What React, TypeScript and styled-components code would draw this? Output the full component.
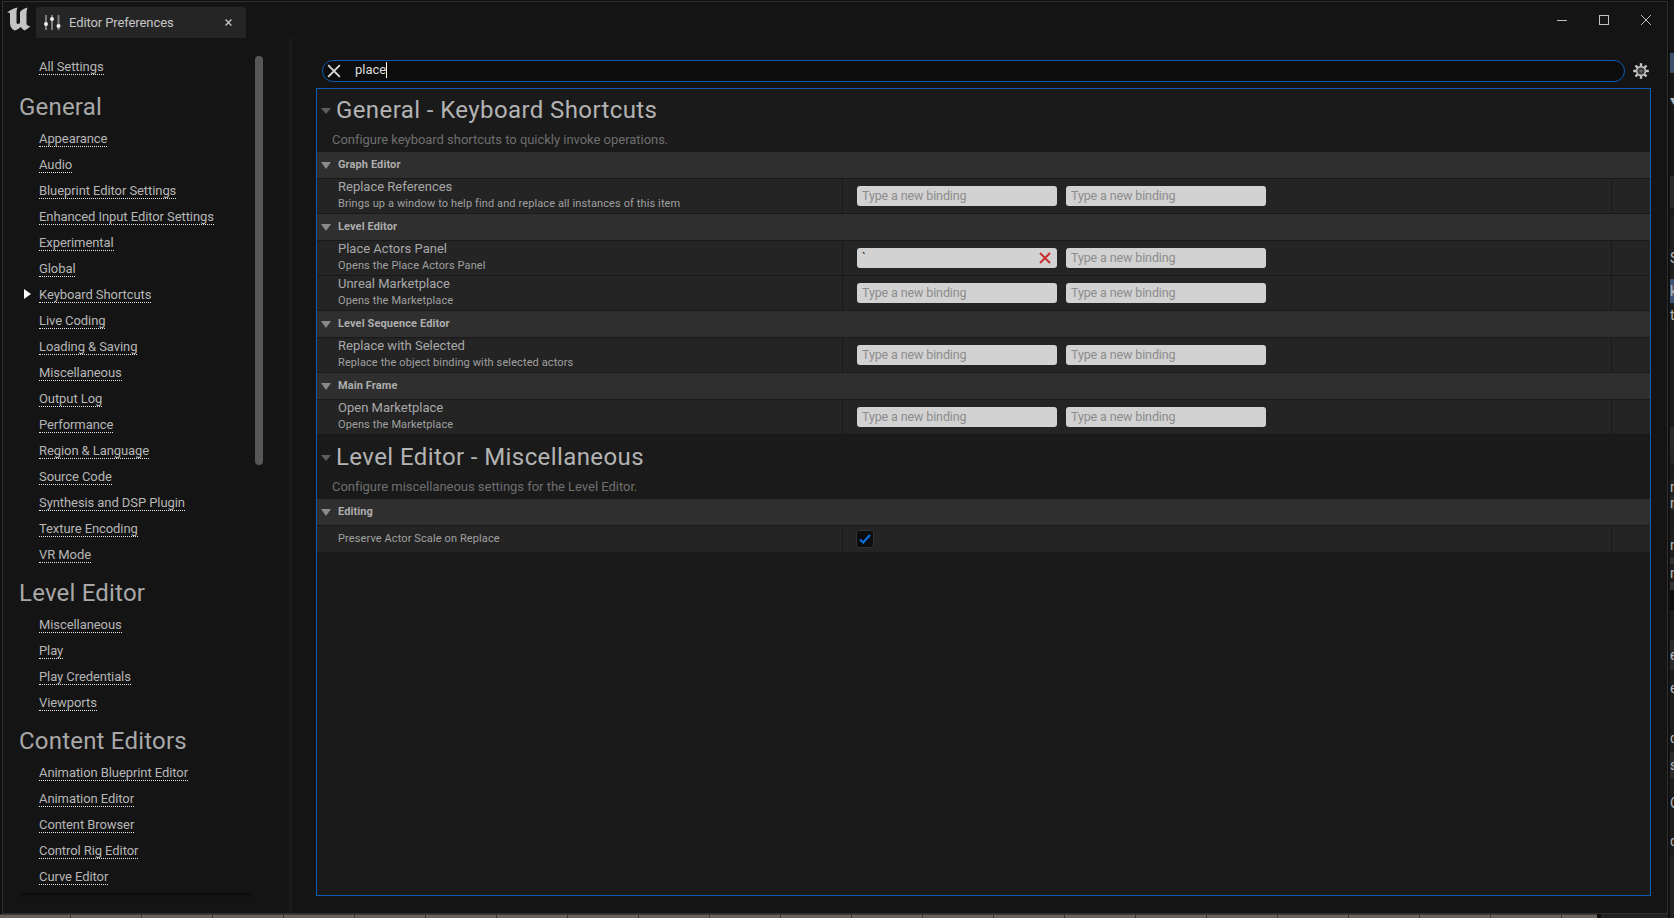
import React from "react";
import styled, { createGlobalStyle } from "styled-components";

const Global = createGlobalStyle`
  html, body { margin: 0; padding: 0; background: #0f0f0f; overflow: hidden; }
  * { box-sizing: border-box; }
  body { font-family: Roboto, "Liberation Sans", sans-serif; }
`;

const Page = styled.div`
  width: 1674px;
  height: 918px;
  display: flex;
  overflow: hidden;
  background: #0f0f0f;
`;
const LeftColumn = styled.div`
  width: 1668px;
  height: 918px;
  display: flex;
  flex-direction: column;
  flex: none;
`;
const Window = styled.div`
  margin: 1px 0 0 2px;
  height: 913px;
  flex: none;
  border: 1px solid #2f2f2f;
  background: #141414;
  display: flex;
  flex-direction: column;
`;
const TitleBar = styled.div`
  height: 36px;
  flex: none;
  display: flex;
  align-items: flex-end;
  padding-left: 3px;
  position: relative;
`;
const LogoWrap = styled.div`
  width: 25px;
  height: 31px;
  margin-right: 5px;
  align-self: flex-end;
  svg { display: block; }
`;
const Tab = styled.div`
  width: 210px;
  height: 31px;
  background: #252525;
  border-radius: 4px 4px 0 0;
  display: flex;
  align-items: center;
  padding-left: 8px;
  color: #c6c6c6;
  font-size: 13px;
  letter-spacing: -0.1px;
`;
const TabLabel = styled.span`
  margin-left: 8px;
  flex: 1;
`;
const TabClose = styled.span`
  margin-right: 14px;
  display: flex;
`;
const WindowControls = styled.div`
  margin-left: auto;
  align-self: center;
  display: flex;
  align-items: center;
  gap: 30px;
  padding-right: 15px;
  margin-top: -1px;
`;
const Body = styled.div`
  flex: 1;
  min-height: 0;
  display: flex;
`;
const Sidebar = styled.nav`
  width: 286px;
  flex: none;
  padding: 15px 0 0 36px;
  position: relative;
  overflow: hidden;
`;
const SideDivider = styled.div`
  width: 3px;
  flex: none;
  background: #1a1a1a;
`;
const SideRow = styled.div`
  height: 26px;
  display: flex;
  align-items: center;
  position: relative;
`;
const SideLink = styled.span`
  color: #b6b6b6;
  font-size: 13px;
  line-height: 15px;
  letter-spacing: -0.08px;
  border-bottom: 1px dotted #e6e6e6;
  margin-top: 1px;
`;
const AllRow = styled(SideRow)`
  margin-bottom: 2px;
`;
const SideHeading = styled.div`
  height: 44px;
  margin-left: -20px;
  padding-top: 11px;
  font-size: 24px;
  line-height: 30px;
  letter-spacing: 0.2px;
  color: #a8a8a8;
`;
const ActiveArrow = styled.span`
  position: absolute;
  left: -15px;
  top: 8px;
  width: 0;
  height: 0;
  border-left: 7px solid #fff;
  border-top: 5.5px solid transparent;
  border-bottom: 5.5px solid transparent;
`;
const Scrollbar = styled.div`
  position: absolute;
  left: 252px;
  top: 18px;
  width: 8px;
  height: 409px;
  background: #575757;
  border-radius: 4px;
`;
const SideShadow = styled.div`
  position: absolute;
  left: 17px;
  width: 232px;
  top: 855px;
  height: 4px;
  background: linear-gradient(to bottom, #0a0a0a, #141414);
`;
const Main = styled.main`
  flex: 1;
  min-width: 0;
  padding: 22px 16px 0 24px;
  display: flex;
  flex-direction: column;
`;
const SearchRow = styled.div`
  height: 22px;
  flex: none;
  display: flex;
  align-items: center;
  padding-left: 6px;
`;
const SearchBox = styled.div`
  width: 1303px;
  height: 22px;
  border: 1px solid #0a5cb3;
  border-radius: 11px;
  background: #0c0c0c;
  display: flex;
  align-items: center;
  padding-left: 4px;
  color: #dcdcdc;
  font-size: 13px;
  flex: none;
`;
const SearchText = styled.span`
  margin-left: 14px;
  margin-top: -3px;
  line-height: 16px;
  border-right: 1px solid #fff;
`;
const GearWrap = styled.div`
  margin-left: 8px;
  display: flex;
`;
const Panel = styled.div`
  margin-top: 6px;
  width: 1335px;
  height: 808px;
  flex: none;
  border: 1px solid #0a5cb3;
  background: #1a1a1a;
`;
const SectionHead = styled.div<{ $lower?: boolean }>`
  height: ${(p) => (p.$lower ? "64px" : "63px")};
  padding: ${(p) => (p.$lower ? "7px" : "6px")} 0 0 4px;
`;
const SectionTitle = styled.div`
  display: flex;
  align-items: center;
  font-size: 24px;
  line-height: 30px;
  color: #b3b3b3;
  letter-spacing: 0.4px;
`;
const TitleArrow = styled.span`
  width: 0;
  height: 0;
  border-top: 6px solid #5c5c5c;
  border-left: 5px solid transparent;
  border-right: 5px solid transparent;
  margin-right: 5px;
  margin-top: 2px;
`;
const SectionDesc = styled.div`
  margin: 7px 0 0 11px;
  font-size: 13px;
  line-height: 16px;
  color: #6e6e6e;
  letter-spacing: -0.03px;
`;
const CategoryRow = styled.div`
  height: 27px;
  background: #2f2f2f;
  border-bottom: 1px solid #191919;
  display: flex;
  align-items: center;
  padding-left: 4px;
  font-size: 11px;
  font-weight: 700;
  letter-spacing: 0.1px;
  color: #adadad;
`;
const CategoryLabel = styled.span`
  margin-top: -1px;
`;
const CategoryArrow = styled.span`
  width: 0;
  height: 0;
  border-top: 7px solid #8a8a8a;
  border-left: 5px solid transparent;
  border-right: 5px solid transparent;
  margin-right: 7px;
  margin-top: 1px;
`;
const Row = styled.div<{ $short?: boolean }>`
  height: ${(p) => (p.$short ? "26px" : "35px")};
  background: #242424;
  border-bottom: ${(p) => (p.$short ? "0" : "1px solid #191919")};
  display: flex;
`;
const NameCell = styled.div<{ $single?: boolean }>`
  width: 526px;
  flex: none;
  padding-left: 21px;
  display: flex;
  flex-direction: column;
  justify-content: ${(p) => (p.$single ? "center" : "flex-start")};
  border-right: 1px solid #191919;
`;
const RowName = styled.div`
  font-size: 13px;
  line-height: 15px;
  color: #a8a8a8;
`;
const RowSub = styled.div`
  font-size: 11px;
  line-height: 16px;
  color: #a0a0a0;
  letter-spacing: 0.11px;
`;
const RowSubSpaced = styled(RowSub)`
  margin-top: 2px;
`;
const ValueCell = styled.div`
  width: 769px;
  flex: none;
  display: flex;
  align-items: center;
  gap: 9px;
  padding-left: 14px;
  border-right: 1px solid #191919;
`;
const Binding = styled.div<{ $set?: boolean }>`
  width: 200px;
  height: 20px;
  border-radius: 3px;
  background: #d2d2d2;
  color: ${(p) => (p.$set ? "#222" : "#8c8c8c")};
  font-size: 12.5px;
  letter-spacing: -0.12px;
  line-height: 20px;
  padding: 0 5px;
  display: flex;
  justify-content: space-between;
`;
const RedX = styled.span`
  display: flex;
  align-items: center;
  margin-right: 1px;
`;
const CheckBox = styled.div`
  width: 18px;
  height: 18px;
  margin-left: -1px;
  background: #0d0d0d;
  border: 1px solid #333;
  border-radius: 3px;
  display: flex;
  align-items: center;
  justify-content: center;
`;
const BottomRow = styled.div`
  flex: 1;
  display: flex;
`;
const Brick = styled.div`
  width: 1597px;
  flex: none;
  background: repeating-linear-gradient(to right, #6a625c 0 70px, #3a3633 70px 71px);
  border-top: 1px solid #3a3633;
`;
const BottomTail = styled.div`
  flex: 1;
  margin-left: 4px;
  background: #222;
`;
const RightStrip = styled.div`
  width: 6px;
  flex: none;
  padding-left: 2px;
  display: flex;
  flex-direction: column;
  overflow: hidden;
`;
const StripSeg = styled.div<{ $h: number; $bg: string }>`
  height: ${(p) => p.$h}px;
  flex: none;
  background: ${(p) => p.$bg};
  color: #b5b5b5;
  font-size: 14px;
  line-height: ${(p) => p.$h}px;
  white-space: nowrap;
  overflow: hidden;
`;

const segments: { h: number; bg: string; t?: string }[] = [
  { h: 53, bg: "#141414" },
  { h: 20, bg: "#3d4f6b" },
  { h: 22, bg: "#171717" },
  { h: 10, bg: "#171717", t: "▾" },
  { h: 71, bg: "#171717" },
  { h: 32, bg: "#2a2a2a" },
  { h: 7, bg: "#181818" },
  { h: 25, bg: "#1e1e1e" },
  { h: 36, bg: "#1e1e1e", t: "S" },
  { h: 3, bg: "#1e1e1e" },
  { h: 24, bg: "#3f5577", t: "k" },
  { h: 24, bg: "#1c1c1c", t: "t" },
  { h: 100, bg: "#191919" },
  { h: 20, bg: "#2a2a2a" },
  { h: 16, bg: "#262626" },
  { h: 15, bg: "#1c1c1c" },
  { h: 18, bg: "#222", t: "n" },
  { h: 14, bg: "#2a2a2a", t: "n" },
  { h: 22, bg: "#1c1c1c" },
  { h: 26, bg: "#1e1e1e", t: "n" },
  { h: 6, bg: "#333" },
  { h: 18, bg: "#1e1e1e", t: "n" },
  { h: 8, bg: "#333" },
  { h: 20, bg: "#0d0d0d" },
  { h: 30, bg: "#1a1a1a" },
  { h: 30, bg: "#2a2a2a", t: "e" },
  { h: 36, bg: "#1c1c1c", t: "e" },
  { h: 18, bg: "#1c1c1c" },
  { h: 28, bg: "#1c1c1c", t: "d" },
  { h: 26, bg: "#2a2a2a", t: "s" },
  { h: 50, bg: "#1c1c1c", t: "C" },
  { h: 26, bg: "#1c1c1c", t: "d" },
  { h: 64, bg: "#222" },
];

const general = ["Appearance","Audio","Blueprint Editor Settings","Enhanced Input Editor Settings","Experimental","Global","Keyboard Shortcuts","Live Coding","Loading & Saving","Miscellaneous","Output Log","Performance","Region & Language","Source Code","Synthesis and DSP Plugin","Texture Encoding","VR Mode"];
const level = ["Miscellaneous","Play","Play Credentials","Viewports"];
const content = ["Animation Blueprint Editor","Animation Editor","Content Browser","Control Rig Editor","Curve Editor"];

const Links = ({ items }: { items: string[] }) => (
  <>
    {items.map((t) => (
      <SideRow key={t}>
        {t === "Keyboard Shortcuts" && <ActiveArrow />}
        <SideLink>{t}</SideLink>
      </SideRow>
    ))}
  </>
);

const Logo = () => (
  <svg width="25" height="24" viewBox="0 0 24 24">
    <path fill="#c4c4c4" d="M0.5 6C2.5 3.5 6 1.5 11 0.5C10 3 10 5 10 8L10 15C10 17 11 17.5 13 16.5L13.5 16L13.5 5C15 3 18 1.2 21 0.5C20.3 3 20 5 20 8L20 16C20 18 21.5 19.5 24 19C22 21 20 22.5 18 23.5C16.5 22.5 15 21.5 14.5 20C12.5 21.5 10 23 8 23.5C5 22 3.5 19.5 3.5 16L3.5 7C3.5 5.5 2 5.5 0.5 6Z" />
  </svg>
);
const SlidersIcon = () => (
  <svg width="17" height="16" viewBox="0 0 17 16">
    <g fill="#7c7c7c">
      <rect x="1" y="0" width="2" height="15" />
      <rect x="7" y="0" width="2" height="15" />
      <rect x="13.5" y="0" width="2" height="15" />
    </g>
    <g fill="#f0f0f0">
      <circle cx="2" cy="9" r="2" />
      <circle cx="8" cy="4" r="2" />
      <circle cx="14.5" cy="11" r="2" />
    </g>
  </svg>
);
const XIcon = ({ size, color, w }: { size: number; color: string; w: number }) => (
  <svg width={size} height={size} viewBox="0 0 12 12">
    <path d="M1 1L11 11M11 1L1 11" stroke={color} strokeWidth={w} fill="none" />
  </svg>
);
const Gear = () => (
  <svg width="16" height="16" viewBox="0 0 16 16">
    <g fill="#c8c8c8">
      {[0, 45, 90, 135].map((a) => (
        <rect key={a} x="6.8" y="0.2" width="2.4" height="15.6" transform={`rotate(${a} 8 8)`} />
      ))}
    </g>
    <circle cx="8" cy="8" r="5.2" fill="#bcbcbc" />
    <circle cx="8" cy="8" r="3.6" fill="#3a3a3a" />
    <circle cx="8" cy="8" r="1.6" fill="#666" />
  </svg>
);

const Bind = ({ value }: { value?: string }) => (
  <Binding $set={!!value}>
    {value ?? "Type a new binding"}
    {value && (
      <RedX>
        <XIcon size={12} color="#c9302c" w={2} />
      </RedX>
    )}
  </Binding>
);

const ShortcutRow = ({ name, sub, first }: { name: string; sub: string; first?: string }) => (
  <Row>
    <NameCell>
      <RowName>{name}</RowName>
      <RowSubSpaced>{sub}</RowSubSpaced>
    </NameCell>
    <ValueCell>
      <Bind value={first} />
      <Bind />
    </ValueCell>
  </Row>
);

const Category = ({ label }: { label: string }) => (
  <CategoryRow>
    <CategoryArrow />
    <CategoryLabel>{label}</CategoryLabel>
  </CategoryRow>
);

export default function App() {
  return (
    <Page>
      <Global />
      <LeftColumn>
        <Window>
          <TitleBar>
            <LogoWrap>
              <Logo />
            </LogoWrap>
            <Tab>
              <SlidersIcon />
              <TabLabel>Editor Preferences</TabLabel>
              <TabClose>
                <XIcon size={7} color="#c0c0c0" w={2.4} />
              </TabClose>
            </Tab>
            <WindowControls>
              <svg width="12" height="12" viewBox="0 0 12 12">
                <rect x="1" y="6" width="10" height="1" fill="#c0c0c0" />
              </svg>
              <svg width="12" height="12" viewBox="0 0 12 12">
                <rect x="1.5" y="1.5" width="9" height="9" stroke="#c0c0c0" fill="none" />
              </svg>
              <XIcon size={12} color="#c0c0c0" w={1} />
            </WindowControls>
          </TitleBar>
          <Body>
            <Sidebar>
              <AllRow>
                <SideLink>All Settings</SideLink>
              </AllRow>
              <SideHeading>General</SideHeading>
              <Links items={general} />
              <SideHeading>Level Editor</SideHeading>
              <Links items={level} />
              <SideHeading>Content Editors</SideHeading>
              <Links items={content} />
              <Scrollbar />
              <SideShadow />
            </Sidebar>
            <SideDivider />
            <Main>
              <SearchRow>
                <SearchBox>
                  <XIcon size={14} color="#d8d8d8" w={1.6} />
                  <SearchText>place</SearchText>
                </SearchBox>
                <GearWrap>
                  <Gear />
                </GearWrap>
              </SearchRow>
              <Panel>
                <SectionHead>
                  <SectionTitle>
                    <TitleArrow />
                    General - Keyboard Shortcuts
                  </SectionTitle>
                  <SectionDesc>Configure keyboard shortcuts to quickly invoke operations.</SectionDesc>
                </SectionHead>
                <Category label="Graph Editor" />
                <ShortcutRow name="Replace References" sub="Brings up a window to help find and replace all instances of this item" />
                <Category label="Level Editor" />
                <ShortcutRow name="Place Actors Panel" sub="Opens the Place Actors Panel" first="`" />
                <ShortcutRow name="Unreal Marketplace" sub="Opens the Marketplace" />
                <Category label="Level Sequence Editor" />
                <ShortcutRow name="Replace with Selected" sub="Replace the object binding with selected actors" />
                <Category label="Main Frame" />
                <ShortcutRow name="Open Marketplace" sub="Opens the Marketplace" />
                <SectionHead $lower>
                  <SectionTitle>
                    <TitleArrow />
                    Level Editor - Miscellaneous
                  </SectionTitle>
                  <SectionDesc>Configure miscellaneous settings for the Level Editor.</SectionDesc>
                </SectionHead>
                <Category label="Editing" />
                <Row $short>
                  <NameCell $single>
                    <RowSub>Preserve Actor Scale on Replace</RowSub>
                  </NameCell>
                  <ValueCell>
                    <CheckBox>
                      <svg width="12" height="10" viewBox="0 0 12 10">
                        <path d="M1 5.5L4.2 8.5L11 1" stroke="#0a70dc" strokeWidth="2.2" fill="none" />
                      </svg>
                    </CheckBox>
                  </ValueCell>
                </Row>
              </Panel>
            </Main>
          </Body>
        </Window>
        <BottomRow>
          <Brick />
          <BottomTail />
        </BottomRow>
      </LeftColumn>
      <RightStrip>
        {segments.map((s, i) => (
          <StripSeg key={i} $h={s.h} $bg={s.bg}>
            {s.t}
          </StripSeg>
        ))}
      </RightStrip>
    </Page>
  );
}
